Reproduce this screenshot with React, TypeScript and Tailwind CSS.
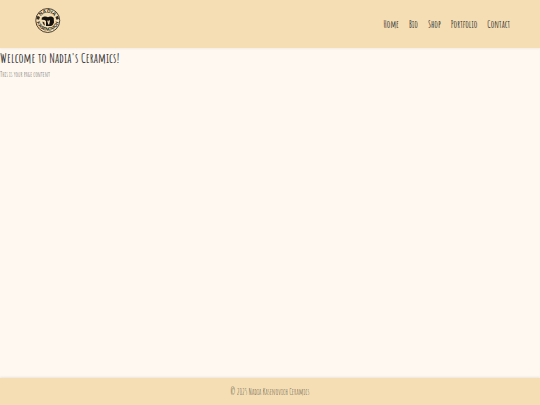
const NAV_LINKS = ["Home", "Bio", "Shop", "Portfolio", "Contact"];

export default function App() {
  return (
    <div className="flex min-h-screen flex-col bg-[#fff8f0] font-['Amatic_SC','Liberation_Sans_Narrow','Liberation_Sans',sans-serif] text-[#333]">
      <Header />
      <main className="flex-1">
        <h1 className="text-[14px] leading-5 font-bold">Welcome to Nadia's Ceramics!</h1>
        <p className="text-[7px] leading-[14px] text-[#333]">This is your page content</p>
      </main>
      <Footer />
    </div>
  );
}

function Header() {
  return (
    <header className="flex h-12 items-center justify-between bg-[#f5deb3] pr-[30px] pl-[34px] shadow-xs">
      <a href="#home" aria-label="Nadia Kasenovich" className="pb-[6px]">
        <Logo />
      </a>
      <nav>
        <ul className="flex gap-[10px]">
          {NAV_LINKS.map((label) => (
            <li key={label} className="text-[10px] leading-4 font-bold">
              <a href={`#${label.toLowerCase()}`}>{label}</a>
            </li>
          ))}
        </ul>
      </nav>
    </header>
  );
}

function Footer() {
  return (
    <footer className="bg-[#f5deb3] pt-[6px] pb-[5px] text-center text-[8px] leading-4 text-[#333] shadow-[0_-1px_2px_rgb(0_0_0/0.08)]">
      © 2025 Nadia Kasenovich Ceramics
    </footer>
  );
}

function Logo() {
  return (
    <svg className="h-7 w-7 font-['Liberation_Sans',sans-serif]" viewBox="0 0 112 112" fill="none">
      <defs>
        <path id="ring-top" d="M23 54a31 31 0 0 1 62 0" />
        <path id="ring-bottom" d="M10 50a45 45 0 0 0 90 0" />
      </defs>
      <circle cx="55" cy="54" r="48" stroke="#4a4033" strokeWidth="4" />
      <g fill="#211c17" fontSize="20" fontWeight="700" textAnchor="middle">
        <text>
          <textPath href="#ring-top" startOffset="50%">NADIA</textPath>
        </text>
        <text fontSize="18">
          <textPath href="#ring-bottom" startOffset="50%">KASENOVICH</textPath>
        </text>
      </g>
      {/* Clay pot held between two hands */}
      <path d="M31 43c9-7 19-6 25-2 6-4 16-4 23 3l1 18c-3 8-7 13-14 14H48V56c-5-4-11-6-17-4z" fill="#14110e" />
      <path d="M52 52l5 6 3-6 4 3-3 15h-4z" fill="#f5deb3" />
      <path d="M34 58l7 3 3 13c-6-2-10-8-10-16z" fill="#332b22" />
      <path d="m14 35 10 5-4 11-10-3zM96 35l-10 5 4 11 10-3z" fill="#332b22" />
    </svg>
  );
}
